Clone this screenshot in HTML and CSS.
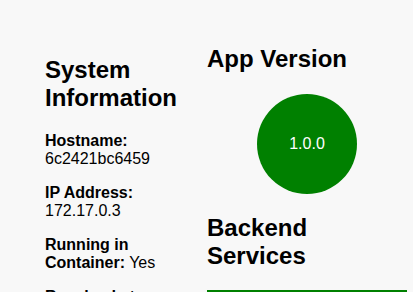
FILE: index.html
```html
<!DOCTYPE html>
<html lang="en">
<head>
<meta charset="utf-8">
<title>System Dashboard</title>
<link rel="stylesheet" href="styles.css">
</head>
<body>
<main class="page">
  <section class="info">
    <h2 class="title">System Information</h2>
    <p class="item"><strong>Hostname:</strong> 6c2421bc6459</p>
    <p class="item"><strong>IP Address:</strong> 172.17.0.3</p>
    <p class="item"><strong>Running in Container:</strong> Yes</p>
    <p class="item"><strong>Resolved at:</strong> now</p>
  </section>
  <section class="side">
    <h2 class="title">App Version</h2>
    <div class="version">1.0.0</div>
    <h2 class="title">Backend Services</h2>
    <div class="service">
      <p class="item"><strong>API:</strong> Healthy</p>
    </div>
  </section>
</main>
</body>
</html>
```

FILE: styles.css
```css
html, body {
  margin: 0;
  padding: 0;
  background: #f8f8f8;
  color: #000;
  font-family: "Liberation Sans", Arial, sans-serif;
}

.page {
  display: flex;
  align-items: flex-start;
  gap: 12px;
  padding: 0 6px 0 45px;
}

.info {
  width: 150px;
  padding-top: 36px;
}

.side {
  width: 200px;
  padding-top: 25px;
}

.title {
  font-size: 24px;
  font-weight: bold;
  margin: 20px 0;
}

.item {
  font-size: 16px;
  margin: 16px 0;
}

.version {
  width: 100px;
  height: 100px;
  margin: 21px auto 20px;
  border-radius: 50%;
  background: #008000;
  color: #fff;
  font-size: 16px;
  display: flex;
  align-items: center;
  justify-content: center;
}

.service {
  border-top: 3px solid #008000;
  padding: 10px;
}
```
